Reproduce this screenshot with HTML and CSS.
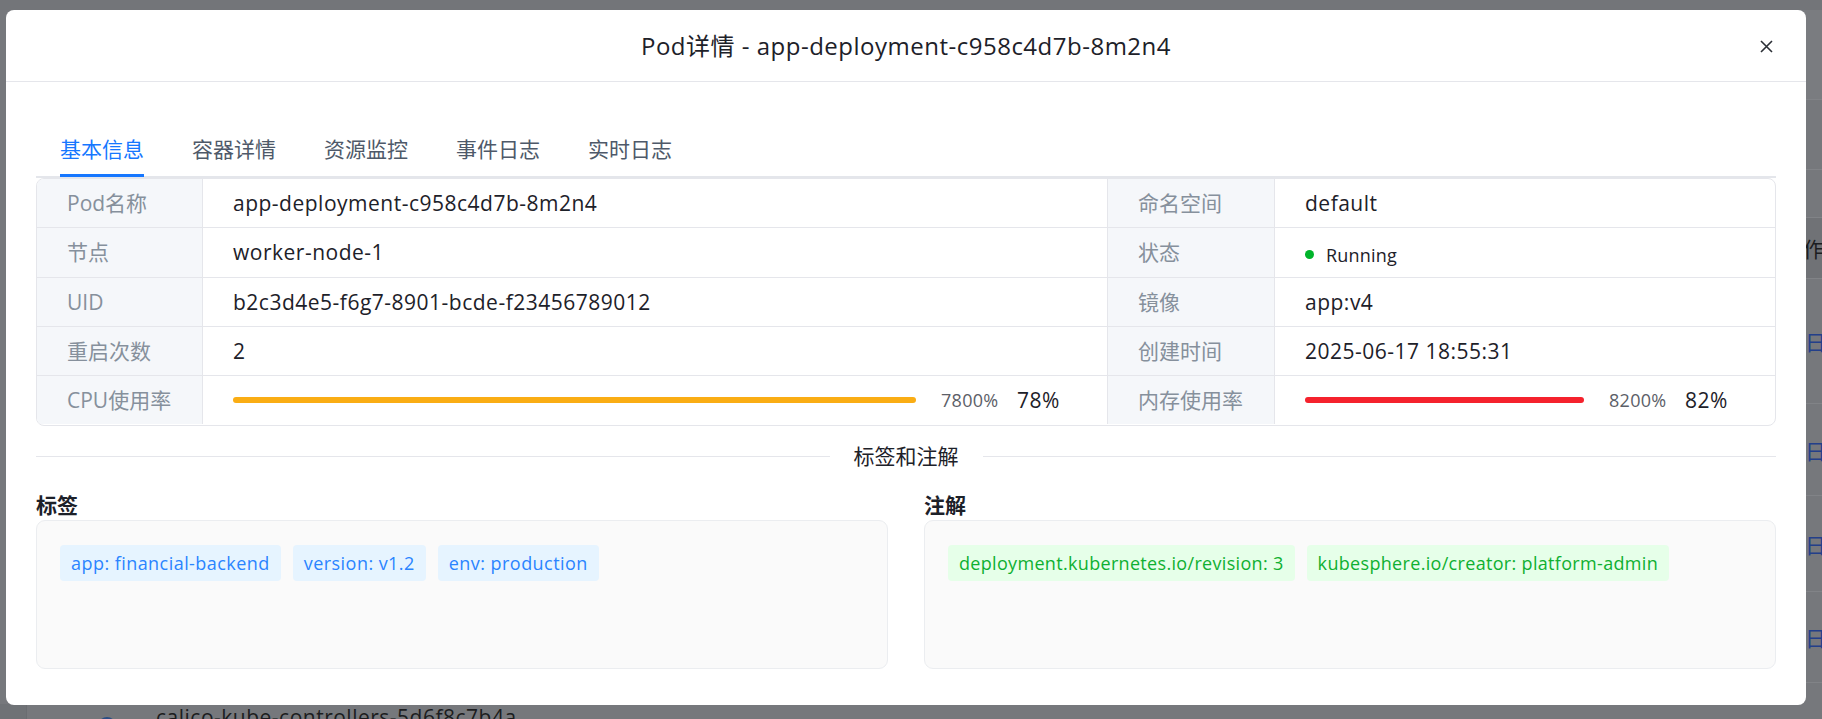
FILE: index.html
```html
<!DOCTYPE html>
<html lang="zh-CN">
<head>
<meta charset="utf-8">
<title>Pod详情</title>
<link rel="stylesheet" href="styles.css">
</head>
<body>
<div class="backdrop">
  <div class="bd-top"></div>
  <div class="bd-mid">
    <div class="bd-right">
      <div class="bd-row r-a"></div>
      <div class="bd-row r-b"></div>
      <div class="bd-row r-c"></div>
      <div class="bd-row r-d"><span class="bd-op">操作</span></div>
      <div class="bd-row r-e"><span class="bd-link">日志</span></div>
      <div class="bd-row r-f"><span class="bd-link">日志</span></div>
      <div class="bd-row r-g"><span class="bd-link">日志</span></div>
      <div class="bd-row r-h"><span class="bd-link">日志</span></div>
      <div class="bd-row r-i"></div>
    </div>
  </div>
  <div class="bd-bottom">
    <span class="bd-side"></span>
    <span class="bd-icon"></span>
    <span class="bd-name">calico-kube-controllers-5d6f8c7b4a</span>
  </div>
</div>

<div class="modal">
  <div class="modal-header">
    <div class="modal-title">Pod详情 - app-deployment-c958c4d7b-8m2n4</div>
    <button class="modal-close" aria-label="关闭">
      <svg width="13" height="13" viewBox="0 0 13 13"><path d="M1 1 L12 12 M12 1 L1 12" stroke="#2b2f36" stroke-width="1.6" fill="none"/></svg>
    </button>
  </div>
  <div class="modal-body">
    <div class="tabs">
      <div class="tab active">基本信息</div>
      <div class="tab">容器详情</div>
      <div class="tab">资源监控</div>
      <div class="tab">事件日志</div>
      <div class="tab">实时日志</div>
    </div>

    <div class="desc">
      <div class="cell label">Pod名称</div>
      <div class="cell value">app-deployment-c958c4d7b-8m2n4</div>
      <div class="cell label">命名空间</div>
      <div class="cell value end">default</div>

      <div class="cell label">节点</div>
      <div class="cell value">worker-node-1</div>
      <div class="cell label">状态</div>
      <div class="cell value end"><span class="status"><span class="dot"></span><span class="status-text">Running</span></span></div>

      <div class="cell label">UID</div>
      <div class="cell value">b2c3d4e5-f6g7-8901-bcde-f23456789012</div>
      <div class="cell label">镜像</div>
      <div class="cell value end">app:v4</div>

      <div class="cell label">重启次数</div>
      <div class="cell value">2</div>
      <div class="cell label">创建时间</div>
      <div class="cell value end">2025-06-17 18:55:31</div>

      <div class="cell label last">CPU使用率</div>
      <div class="cell value last">
        <span class="bar bar-cpu"></span>
        <span class="pct-raw">7800%</span>
        <span class="pct">78%</span>
      </div>
      <div class="cell label last">内存使用率</div>
      <div class="cell value last end">
        <span class="bar bar-mem"></span>
        <span class="pct-raw">8200%</span>
        <span class="pct">82%</span>
      </div>
    </div>

    <div class="divider">
      <span class="divider-line"></span>
      <span class="divider-text">标签和注解</span>
      <span class="divider-line"></span>
    </div>

    <div class="meta">
      <div class="meta-col">
        <div class="meta-title">标签</div>
        <div class="meta-box">
          <span class="tag tag-blue">app: financial-backend</span>
          <span class="tag tag-blue">version: v1.2</span>
          <span class="tag tag-blue">env: production</span>
        </div>
      </div>
      <div class="meta-col">
        <div class="meta-title">注解</div>
        <div class="meta-box">
          <span class="tag tag-green">deployment.kubernetes.io/revision: 3</span>
          <span class="tag tag-green">kubesphere.io/creator: platform-admin</span>
        </div>
      </div>
    </div>
  </div>
</div>
</body>
</html>
```

FILE: styles.css
```css
* { box-sizing: border-box; }

body {
  margin: 0;
  width: 1822px;
  height: 719px;
  overflow: hidden;
  position: relative;
  background: #76787c;
  font-family: "Open Sans", "Noto Sans CJK SC", sans-serif;
}

/* ---------- dimmed page behind the modal ---------- */
.backdrop {
  display: flex;
  flex-direction: column;
  height: 719px;
}
.bd-top { height: 10px; background: #737579; }
.bd-mid {
  height: 694px;
  display: flex;
  justify-content: flex-end;
}
.bd-right {
  width: 40px;
  display: flex;
  flex-direction: column;
  overflow: hidden;
}
.bd-row {
  display: flex;
  align-items: center;
  border-bottom: 1px solid #818387;
  white-space: nowrap;
}
.r-a { height: 90px; background: #7a7c80; }
.r-b { height: 70px; }
.r-c { height: 48px; }
.r-d { height: 61px; background: #707276; }
.r-e { height: 125px; }
.r-f { height: 92px; }
.r-g { height: 96px; }
.r-h { height: 91px; }
.r-i { height: 21px; border-bottom: none; }
.bd-op { font-size: 21px; color: #1c1d20; }
.bd-link { font-size: 21px; color: #233f8a; padding-left: 23px; }

.bd-bottom {
  height: 15px;
  display: flex;
  align-items: flex-start;
  overflow: hidden;
}
.bd-side { width: 27px; height: 15px; background: #6f7276; border-right: 1px solid #6a6d71; }
.bd-icon {
  width: 18px;
  height: 18px;
  margin-left: 71px;
  margin-top: 13px;
  border-radius: 50%;
  background: #2b4d85;
}
.bd-name {
  margin-left: 40px;
  margin-top: 3px;
  font-size: 21px;
  line-height: 21px;
  letter-spacing: 0.5px;
  color: #1c1d20;
  white-space: nowrap;
}

/* ---------- modal ---------- */
.modal {
  position: absolute;
  left: 6px;
  top: 10px;
  width: 1800px;
  background: #fff;
  border-radius: 8px;
}
.modal-header {
  height: 72px;
  border-bottom: 1px solid #e5e6eb;
  display: flex;
  align-items: center;
  justify-content: center;
  position: relative;
}
.modal-title {
  font-size: 24px;
  line-height: 34px;
  letter-spacing: 0.5px;
  color: #1d2129;
}
.modal-close {
  position: absolute;
  right: 33px;
  top: 30px;
  width: 13px;
  height: 13px;
  padding: 0;
  border: none;
  background: none;
  display: flex;
}

.modal-body {
  padding: 40px 30px 36px;
}

/* tabs */
.tabs {
  display: flex;
  gap: 48px;
  padding-left: 24px;
  border-bottom: 2px solid #e4e6eb;
}
.tab {
  position: relative;
  font-size: 21px;
  line-height: 34px;
  padding: 10px 0;
  color: #4e5969;
}
.tab.active { color: #1677ff; }
.tab.active::after {
  content: "";
  position: absolute;
  left: 0;
  right: 0;
  bottom: -1px;
  height: 3px;
  background: #1677ff;
}

/* descriptions table */
.desc {
  display: grid;
  grid-template-columns: 166px 905px 167px 1fr;
  grid-auto-rows: 49.25px;
  border: 1px solid #e5e6eb;
  border-radius: 8px;
  overflow: hidden;
}
.cell {
  display: flex;
  align-items: center;
  padding: 0 30px;
  font-size: 21px;
  line-height: 30px;
  border-right: 1px solid #e5e6eb;
  border-bottom: 1px solid #e5e6eb;
  white-space: nowrap;
}
.cell.end { border-right: none; }
.cell.last { border-bottom: none; height: 48px; }
.label { background: #f5f7fa; color: #86909c; }
.value { color: #1d2129; letter-spacing: 0.5px; }

.status { display: flex; align-items: center; padding-top: 5px; }
.dot {
  width: 9px;
  height: 9px;
  border-radius: 50%;
  background: #00b42a;
}
.status-text { margin-left: 12px; font-size: 18px; letter-spacing: 0.2px; color: #1d2129; }

.bar {
  flex: 1;
  height: 6px;
  border-radius: 3px;
}
.bar-cpu { background: #faad14; }
.bar-mem { background: #f5222d; }
.pct-raw {
  width: 58px;
  margin-left: 25px;
  font-size: 18px;
  letter-spacing: 0.3px;
  color: #5c6068;
}
.pct {
  width: 60px;
  margin-left: 18px;
  font-size: 21px;
  color: #1d2129;
}

/* divider */
.divider {
  display: flex;
  align-items: center;
  margin-top: 14px;
  height: 33px;
}
.divider-line { flex: 1; height: 1px; background: #e5e6eb; }
.divider-text {
  padding: 0 24px;
  font-size: 21px;
  line-height: 33px;
  color: #1d2129;
}

/* labels and annotations */
.meta {
  display: grid;
  grid-template-columns: 1fr 1fr;
  gap: 36px;
  margin-top: 17px;
}
.meta-title {
  font-size: 21px;
  line-height: 30px;
  font-weight: 700;
  color: #1d2129;
}
.meta-box {
  height: 149px;
  border: 1px solid #ebedf0;
  border-radius: 9px;
  background: #fafafa;
  padding: 24px 23px;
  display: flex;
  flex-wrap: wrap;
  align-content: flex-start;
  gap: 12px;
}
.tag {
  height: 36px;
  line-height: 36px;
  padding: 0 11px;
  font-size: 18px;
  letter-spacing: 0.45px;
  border-radius: 4px;
  white-space: nowrap;
}
.tag-blue { background: #e6f4ff; color: #2a84ff; }
.tag-green { background: #e6ffe9; color: #0fb031; letter-spacing: 0.32px; }
```
